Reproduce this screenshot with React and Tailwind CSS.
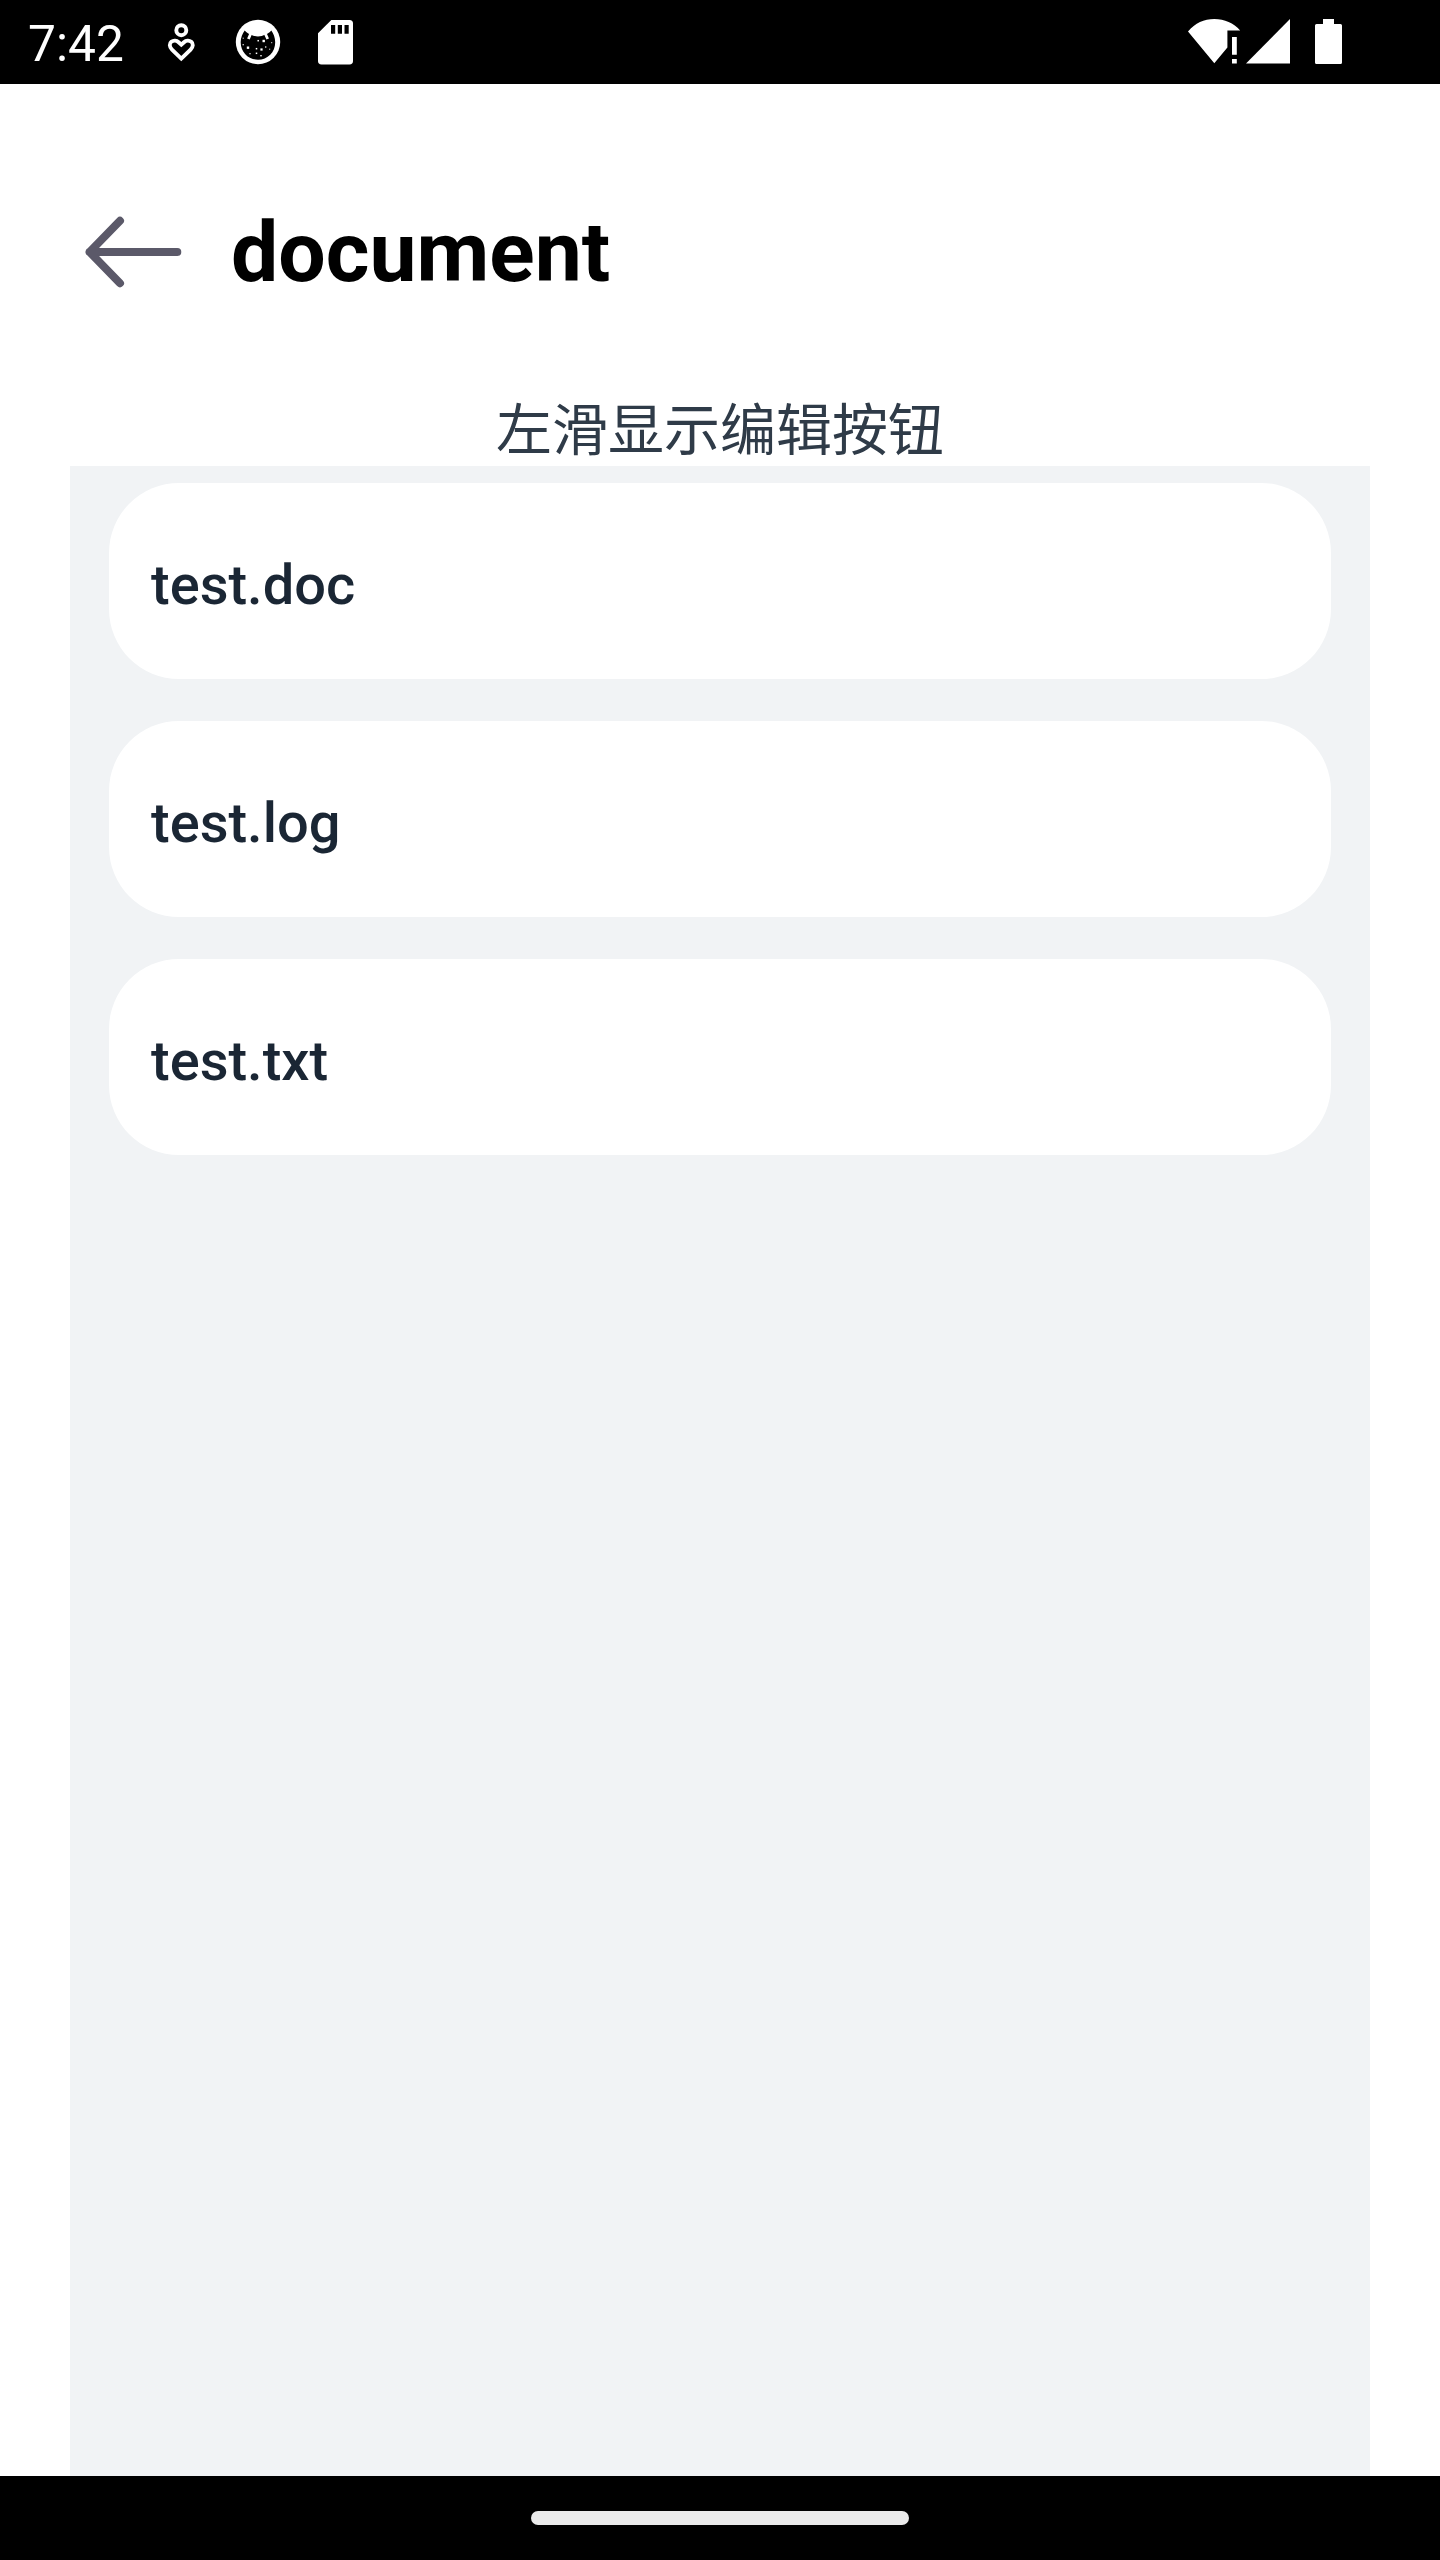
const files = ["test.doc", "test.log", "test.txt"];

function PersonHeartIcon() {
  return (
    <svg className="w-[28px] h-[44px]" viewBox="167 20 28 44" fill="none" stroke="white" strokeWidth="3.9">
      <circle cx="181.3" cy="30.2" r="5" />
      <path strokeLinejoin="miter" d="M181.3 58.6 L172 49.6 C169.2 46.8 169.2 43.4 171.3 41.8 C173.6 40 176.6 40.4 178.6 42.2 L181.3 44.7 L184 42.2 C186 40.4 189 40 191.3 41.8 C193.4 43.4 193.4 46.8 190.6 49.6 Z" />
    </svg>
  );
}

const specks = [
  [243.5, 38.5, 1], [258.5, 41, 1.5], [264, 41.3, 2.4], [243.5, 45, 1.2],
  [248.3, 48, 2.4], [256.8, 49, 1.5], [261.8, 49.8, 2.2], [266, 47.3, 1.3], [270, 49.5, 1],
  [250.3, 54, 1.2], [256.8, 53.6, 1.5], [261.3, 56, 1.4], [272, 43, 1],
];

function CatIcon() {
  return (
    <svg className="w-[46px] h-[46px]" viewBox="235.3 19.3 46 46">
      <circle cx="258.3" cy="42.3" r="22.2" fill="white" />
      <path fill="black" d="M245 30.8 C247 33 248.8 34.2 250.8 34.8 Q258.3 38.6 265.8 34.8 C267.8 34.2 269.8 33 271.6 30.8 C273.8 34 275.5 38 275.5 42.5 C275.5 52.5 268 60 258.3 60 C248.6 60 241 52.5 241 42.5 C241 38 242.8 34 245 30.8 Z" />
      <path fill="none" stroke="white" strokeWidth="2.8" d="M251 34 L248.7 39.3 M265.6 34 L268 39.3" />
      {specks.map(([x, y, s]) => (
        <rect key={x + "-" + y} x={x - s / 2} y={y - s / 2} width={s} height={s} fill="white" />
      ))}
    </svg>
  );
}

function SdCardIcon() {
  return (
    <svg className="w-[36px] h-[46px]" viewBox="318 19 36 46">
      <path fill="white" d="M331.3 20 H349.5 Q353 20 353 23.5 V61 Q353 64.4 349.5 64.4 H321.5 Q318 64.4 318 61 V33.3 Z" />
      <path d="M331 25 h4.2 v8.8 h-4.2z M337.8 25 h4.2 v8.8 h-4.2z M344.5 25 h4.2 v8.8 h-4.2z" />
    </svg>
  );
}

function WifiAlertIcon() {
  return (
    <svg className="w-[54px] h-[46px]" viewBox="1187 18 54 46">
      <path fill="white" d="M1188 31.4 C1195.2 23 1204 19 1214.3 19 C1224.6 19 1233.6 23 1240.2 30.4 H1227.4 V47.5 L1214.3 63.3 Z" />
      <path fill="white" d="M1232 37 h4.8 v17.8 h-4.8z M1232 59 h4.8 v4.5 h-4.8z" />
    </svg>
  );
}

function StatusBar() {
  return (
    <header className="flex h-[84px] shrink-0 items-start bg-black text-white">
      <span className="ml-[28px] mt-[15px] w-[139px] text-[49.7px] leading-[58px]">7:42</span>
      <div className="mt-5 flex"><PersonHeartIcon /></div>
      <div className="ml-[40px] mt-[19px]"><CatIcon /></div>
      <div className="ml-[37px] mt-[19px]"><SdCardIcon /></div>
      <div className="ml-auto mr-[98px] mt-[18px] flex">
        <WifiAlertIcon />
        <svg className="ml-[5px] h-[46px] w-[44px]" viewBox="1246 18 44 46">
          <path fill="white" d="M1246 63.4 H1290 V19 Z" />
        </svg>
        <svg className="ml-[25px] h-[47px] w-[27px]" viewBox="1315 18 27 47">
          <path fill="white" d="M1323 19 h11 v5 h6.5 q1.5 0 1.5 1.5 v37 q0 1.5 -1.5 1.5 h-24 q-1.5 0 -1.5 -1.5 v-37 q0 -1.5 1.5 -1.5 h6.5z" />
        </svg>
      </div>
    </header>
  );
}

export default function App() {
  return (
    <div className="flex h-[2560px] w-[1440px] flex-col overflow-hidden bg-white font-[Roboto,'Noto_Sans_CJK_SC',sans-serif]">
      <StatusBar />
      <main className="flex flex-1 flex-col px-[70px]">
        <div className="flex h-[302px] items-start">
          <button aria-label="Back" className="ml-[15px] mt-[132px]">
            <svg className="h-[72px] w-[97px]" viewBox="0 0 97 72" fill="none" stroke="#5b5969" strokeWidth="8" strokeLinecap="round" strokeLinejoin="round">
              <path d="M92.3 36 H4.6 M35 4.8 L4.6 36 L35 67.2" />
            </svg>
          </button>
          <h1 className="ml-[49px] mt-[119px] text-[84px] font-bold leading-[100px] text-black">document</h1>
        </div>
        <p className="h-20 text-center font-['Noto_Sans_CJK_SC',sans-serif] text-[56px] leading-[80px] text-[#2f3b48]">左滑显示编辑按钮</p>
        <ul className="flex flex-1 flex-col gap-[42px] bg-[#f1f3f5] px-[39px] pt-[17.25px]">
          {files.map((name) => (
            <li key={name} className="flex h-[196px] items-center rounded-[70px] bg-white px-[42px] pt-[8px] text-[56px] font-medium leading-[66px] text-[#1a2634]">
              {name}
            </li>
          ))}
        </ul>
      </main>
      <footer className="flex h-[84px] shrink-0 items-start justify-center bg-black pt-[35px]">
        <div className="h-[14px] w-[378px] rounded-full bg-[#ebebeb]" />
      </footer>
    </div>
  );
}
